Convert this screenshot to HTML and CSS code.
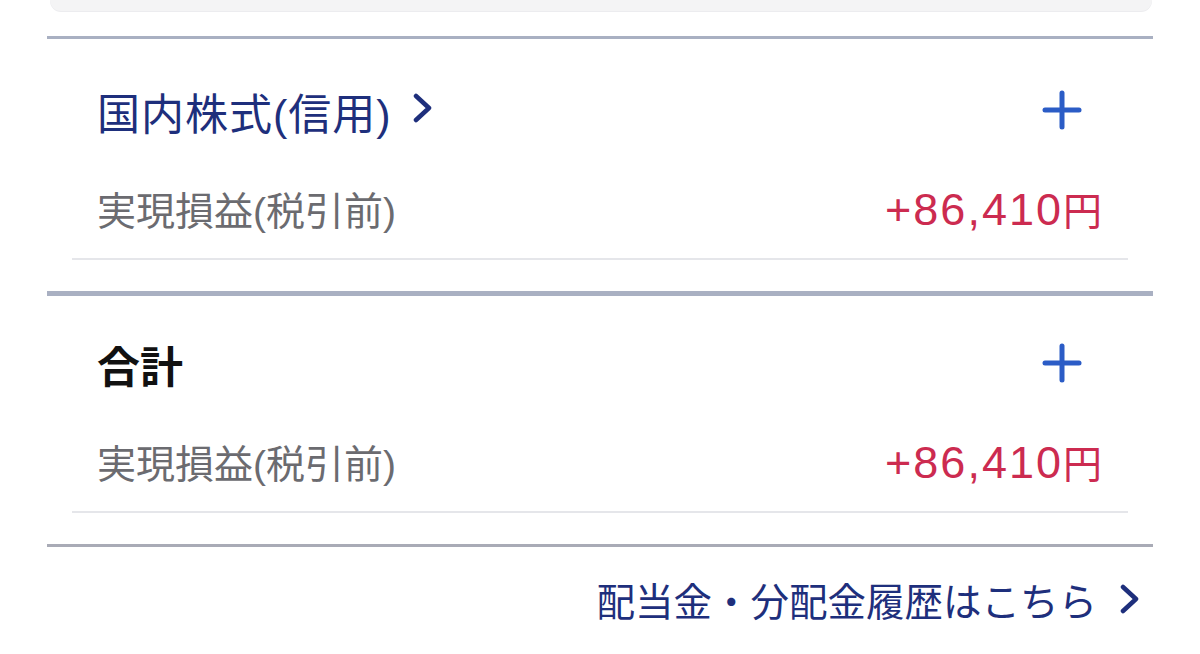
FILE: index.html
```html
<!DOCTYPE html>
<html lang="ja">
<head>
    <meta charset="UTF-8">
    <meta name="viewport" content="width=device-width, initial-scale=1.0">
    <title>実現損益</title>
    <link rel="stylesheet" href="styles.css">
</head>
<body>
    <div class="summary-card"></div>

    <div class="panel">
        <!-- 国内株式(信用) -->
        <section class="group">
            <div class="group-head">
                <a class="group-title link" href="#">
                    国内株式(信用)
                    <svg class="chevron" viewBox="0 0 22 30" width="22" height="30">
                        <polyline points="4,3 17,15 4,27" />
                    </svg>
                </a>
                <button class="expand" aria-label="開く">
                    <svg viewBox="0 0 40 40" width="40" height="40">
                        <line x1="20" y1="3" x2="20" y2="37" />
                        <line x1="3" y1="20" x2="37" y2="20" />
                    </svg>
                </button>
            </div>
            <div class="row">
                <span class="label">実現損益(税引前)</span>
                <span class="amount"><span class="num">+86,410</span>円</span>
            </div>
            <div class="rule"></div>
        </section>

        <!-- 合計 -->
        <section class="group total">
            <div class="group-head">
                <span class="group-title">合計</span>
                <button class="expand" aria-label="開く">
                    <svg viewBox="0 0 40 40" width="40" height="40">
                        <line x1="20" y1="3" x2="20" y2="37" />
                        <line x1="3" y1="20" x2="37" y2="20" />
                    </svg>
                </button>
            </div>
            <div class="row">
                <span class="label">実現損益(税引前)</span>
                <span class="amount"><span class="num">+86,410</span>円</span>
            </div>
            <div class="rule"></div>
        </section>

        <div class="footer">
            <a class="history-link" href="#">
                配当金・分配金履歴はこちら
                <svg class="chevron" viewBox="0 0 22 30" width="22" height="30">
                    <polyline points="4,3 17,15 4,27" />
                </svg>
            </a>
        </div>
    </div>
</body>
</html>
```

FILE: styles.css
```css
* {
    margin: 0;
    padding: 0;
    box-sizing: border-box;
}

body {
    background: #ffffff;
    font-family: "Liberation Sans", "Noto Sans CJK JP", sans-serif;
    color: #1a1a1a;
}

.summary-card {
    height: 11px;
    margin: 0 48px 0 50px;
    background: #f4f4f5;
    border-radius: 0 0 20px 20px;
    box-shadow: 0 1px 0 #ececef;
}

.panel {
    margin: 25px 47px 0;
}

.group {
    border-top: 3px solid #a9b0c2;
    padding: 33px 25px 31px;
}

.group.total {
    border-top-width: 5px;
    padding-top: 29px;
}

.group-head {
    height: 78px;
    display: flex;
    align-items: center;
    justify-content: space-between;
    padding: 0 46px 0 25px;
}

.group-title {
    font-size: 43px;
    font-weight: bold;
    color: #111111;
    display: flex;
    align-items: center;
    gap: 20px;
    text-decoration: none;
}

.group-title.link {
    font-weight: normal;
    color: #1e2f7c;
    letter-spacing: 1px;
}

.group-title .chevron {
    margin-top: -6px;
}

.chevron {
    fill: none;
    stroke: currentColor;
    stroke-width: 4.5;
    stroke-linecap: round;
    stroke-linejoin: round;
}

.expand {
    background: none;
    border: none;
    display: flex;
    cursor: pointer;
    margin-top: -2px;
}

.expand svg {
    stroke: #2b5cc6;
    stroke-width: 5;
    stroke-linecap: round;
}

.row {
    height: 60px;
    margin-top: 28px;
    display: flex;
    align-items: center;
    justify-content: space-between;
    padding: 0 26px 0 25px;
}

.label {
    font-size: 39px;
    color: #6b6b70;
}

.amount {
    font-size: 39px;
    color: #cc2b50;
}

.amount .num {
    font-size: 45px;
    letter-spacing: 2px;
}

.rule {
    margin-top: 20px;
    border-top: 2px solid #e5e6ea;
}

.footer {
    border-top: 3px solid #a9abb6;
    padding: 27px 12px 0 0;
    display: flex;
    justify-content: flex-end;
}

.history-link {
    height: 50px;
    display: flex;
    align-items: center;
    gap: 22px;
    font-size: 38.5px;
    color: #1e2f7c;
    text-decoration: none;
}
```
